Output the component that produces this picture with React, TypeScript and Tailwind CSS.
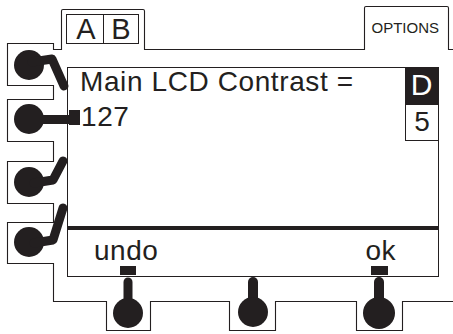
const ink = "#231f20";

const Frame = () => (
  <svg
    className="absolute inset-0"
    width={453}
    height={334}
    viewBox="0 0 453 334"
    fill="none"
  >
    <path
      d="M453 49.5 H448.5 V8 Q448.5 6.5 447 6.5 H366 Q364.5 6.5 364.5 8 V49.5 H144.5 V11 Q144.5 9.5 143 9.5 H63 Q61.5 9.5 61.5 11 V49.5 H53.5 V43.5 H7.5 V85.5 H53.5 V99.5 H7.5 V141.5 H53.5 V161.5 H7.5 V203.5 H53.5 V222.5 H7.5 V263.5 H53.5 V301.5 H106.5 V330.5 H150.5 V301.5 H229.5 V330.5 H275.5 V301.5 H356.5 V330.5 H402.5 V301.5 H453"
      stroke={ink}
      strokeWidth={1.1}
    />
    <g fill={ink} stroke={ink}>
      {/* left knobs */}
      <circle cx={29} cy={65} r={15} stroke="none" />
      <path d="M32 62 L52 59 L64 86" strokeWidth={9} strokeLinejoin="round" strokeLinecap="round" fill="none" />
      <circle cx={29} cy={119} r={15} stroke="none" />
      <rect x={29} y={115} width={41} height={9} stroke="none" />
      <rect x={69} y={110} width={11} height={15} stroke="none" />
      <circle cx={29} cy={182} r={15} stroke="none" />
      <path d="M34 183 L53 180 L63 161" strokeWidth={9} strokeLinejoin="round" strokeLinecap="round" fill="none" />
      <circle cx={29} cy={242} r={15} stroke="none" />
      <path d="M34 243 L53 240 L63 208" strokeWidth={9} strokeLinejoin="round" strokeLinecap="round" fill="none" />
      {/* bottom knobs */}
      <rect x={120} y={266} width={16} height={9} stroke="none" />
      <path d="M128 282 V305" strokeWidth={9} strokeLinecap="round" fill="none" />
      <circle cx={128} cy={313} r={15} stroke="none" />
      <path d="M253 282 V300" strokeWidth={10} strokeLinecap="round" fill="none" />
      <circle cx={253} cy={312} r={15} stroke="none" />
      <rect x={371} y={266} width={17} height={9} stroke="none" />
      <path d="M379 282 V305" strokeWidth={10} strokeLinecap="round" fill="none" />
      <circle cx={379} cy={313} r={16} stroke="none" />
    </g>
  </svg>
);

export default function App() {
  return (
    <div
      className="relative w-[453px] h-[334px] bg-white overflow-hidden text-[#231f20]"
      style={{ fontFamily: '"Liberation Sans", Arial, sans-serif' }}
    >
      <Frame />
      <div className="relative flex flex-col">
        <div className="flex items-start h-[67px]">
          <div className="ml-[66px] mt-[14px] flex w-[73px] h-[30px] border border-[#231f20]">
            <div className="w-[37px] border-r border-[#231f20] flex items-center justify-center text-[29px] leading-none pt-[1px] pl-[2px]">
              A
            </div>
            <div className="flex-1 flex items-center justify-center text-[29px] leading-none pt-[1px]">
              B
            </div>
          </div>
          <div className="ml-auto mr-[14px] mt-[20px] text-[15px] leading-[15px]">
            OPTIONS
          </div>
        </div>

        <div className="ml-[67px] w-[372px] h-[210px] border border-[#231f20] flex flex-col">
          <div className="flex h-[158px]">
            <div className="flex-1 pl-[12px] text-[28px] tracking-[0.6px]">
              <div className="leading-[28px]">Main LCD Contrast =</div>
              <div className="leading-[28px] mt-[7px] pl-[1px]">127</div>
            </div>
            <div className="w-[33px] flex flex-col">
              <div className="h-[37px] bg-[#231f20] text-white text-[30px] leading-[30px] flex justify-center pt-[2px]">
                D
              </div>
              <div className="h-[36px] border-l border-b border-[#231f20] text-[28px] leading-[28px] flex justify-center pt-[3px]">
                5
              </div>
            </div>
          </div>
          <div className="h-[4px] bg-[#231f20]" />
          <div className="flex-1 flex pt-[7px] text-[28px] leading-[28px] tracking-[0.5px]">
            <div className="ml-[26px]">undo</div>
            <div className="ml-auto mr-[42px]">ok</div>
          </div>
        </div>
      </div>
    </div>
  );
}
